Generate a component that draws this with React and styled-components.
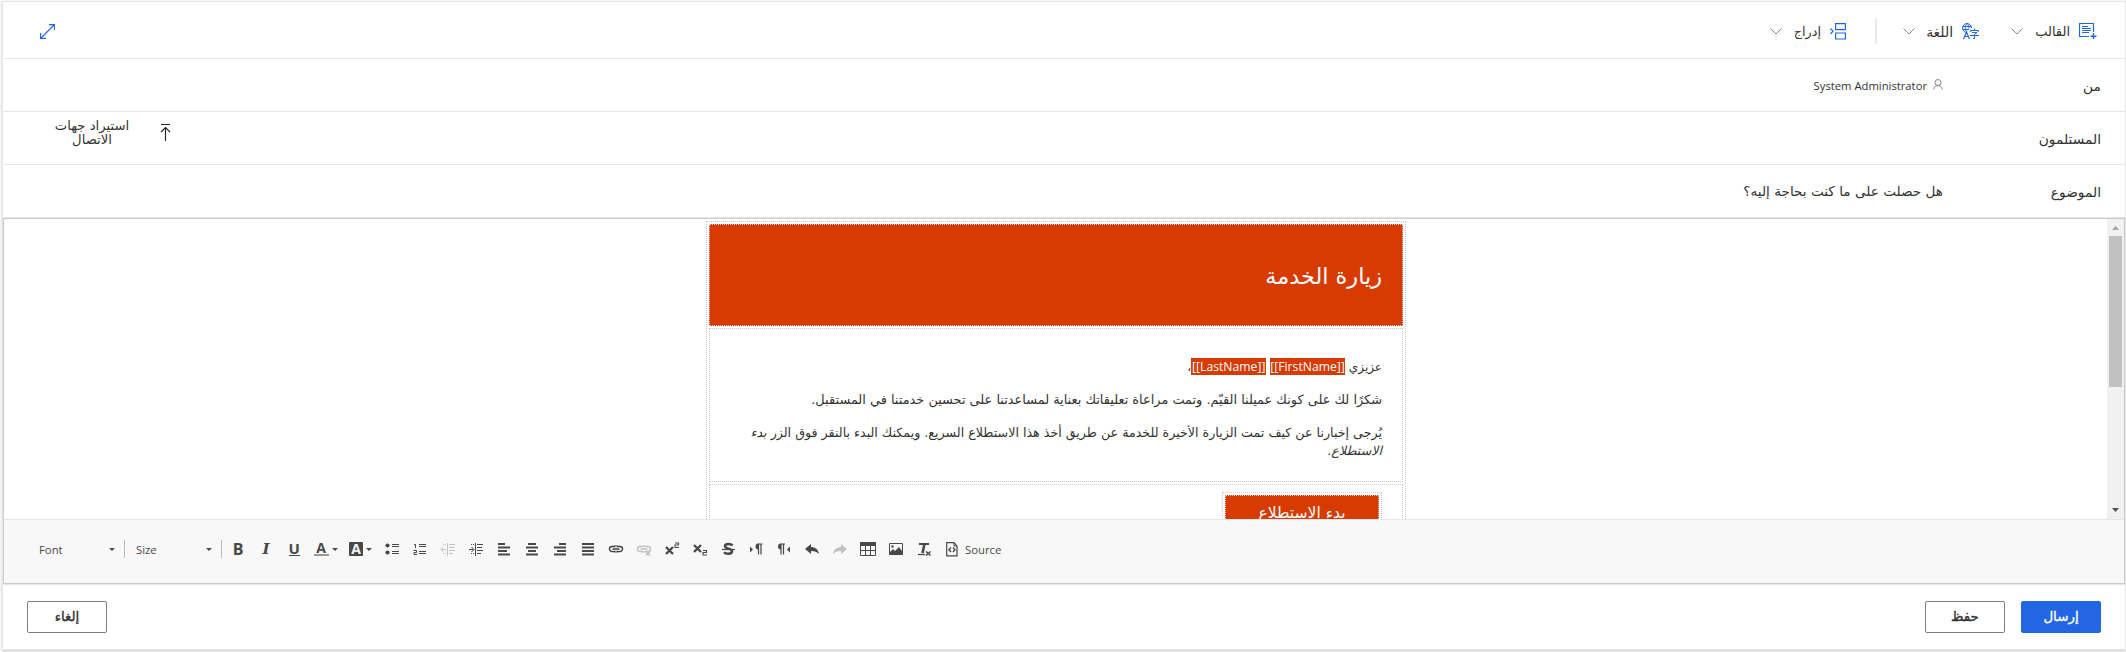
import React from "react";
import styled, { createGlobalStyle, css } from "styled-components";

const ink = "#333";
const blue = "#2266e3";
const line = "#e6e6e6";

const Global = createGlobalStyle`
  * { box-sizing: border-box; }
  body { margin: 0; background: #fff; color: ${ink}; font-family: "DejaVu Sans", sans-serif; }
  svg { display: block; flex: none; }
`;

const Page = styled.main`
  height: 652px;
  padding: 1px 0 2px 2px;
  background: #fafafa;
  display: flex;
  direction: ltr;
  overflow: hidden;
`;
const Card = styled.section`
  direction: rtl;
  flex: 1;
  height: 649px;
  background: #fff;
  border: 1px solid ${line};
  box-shadow: 0 1px 2px rgba(0, 0, 0, 0.2);
  display: flex;
  flex-direction: column;
`;
const CommandBar = styled.header`
  height: 57px;
  padding: 3px 28px 0 37px;
  display: flex;
  align-items: center;
  border-bottom: 1px solid ${line};
`;
const Command = styled.button`
  all: unset;
  display: flex;
  align-items: center;
  width: ${(p) => p.$width}px;
  margin-left: ${(p) => p.$gap || 0}px;
  color: ${ink};
  svg:last-child { margin-right: auto; }
`;
const CommandLabel = styled.span`
  font-size: ${(p) => p.$size}px;
  line-height: 20px;
  margin-right: 9px;
  white-space: nowrap;
`;
const Separator = styled.i`
  width: 2px;
  height: 25px;
  margin-left: 29px;
  background: #ebe9e7;
`;
const Expand = styled.button`
  all: unset;
  margin-right: auto;
`;
const Field = styled.div`
  height: 53px;
  padding: 1px 24px 0 50px;
  display: flex;
  align-items: center;
  border-bottom: 1px solid ${line};
`;
const FieldLabel = styled.label`
  width: 158px;
  font-size: 13.8px;
  white-space: nowrap;
`;
const Sender = styled.span`
  display: flex;
  align-items: center;
  gap: 6px;
  font: 11.25px/16px "Open Sans", sans-serif;
  svg { margin-bottom: 2px; }
`;
const Subject = styled.span`
  font-size: 13.6px;
  padding-bottom: 1px;
  white-space: nowrap;
`;
const ImportButton = styled.button`
  all: unset;
  margin-right: auto;
  display: flex;
  align-items: center;
  gap: 29px;
  padding-bottom: 12px;
`;
const ImportLabel = styled.span`
  width: 78px;
  text-align: center;
  font-size: 13.2px;
  line-height: 14px;
  white-space: nowrap;
`;

const Editor = styled.section`
  height: 366px;
  border: 1px solid #ccc;
  display: flex;
  flex-direction: column;
  direction: ltr;
`;
const Viewport = styled.div`
  height: 300px;
  display: flex;
  overflow: hidden;
`;
const Sheet = styled.div`
  flex: 1;
  display: flex;
  justify-content: center;
  align-items: flex-start;
  padding: 2px 0 0 1px;
  overflow: hidden;
`;
const dotted = css`border: 1px dotted #ccc;`;
const Mail = styled.article`
  ${dotted}
  direction: rtl;
  width: 700px;
  height: 420px;
  padding: 2px;
  display: flex;
  flex-direction: column;
  gap: 2px;
`;
const Banner = styled.div`
  ${dotted}
  height: 102px;
  padding: 2px 20px 0;
  display: flex;
  align-items: center;
  background: #d83b01;
  color: #fff;
  h1 { margin: 0; font-size: 22.4px; font-weight: 400; line-height: 30px; }
`;
const Copy = styled.div`
  ${dotted}
  height: 154px;
  padding: 29px 20px 0;
`;
const Paragraph = styled.p`
  margin: 0 0 15px;
  font-size: ${(p) => p.$size}px;
  line-height: 18px;
  white-space: nowrap;
`;
const Token = styled.bdi`
  display: inline-block;
  direction: ltr;
  height: 17px;
  width: 75px;
  text-align: center;
  background: #d83b01;
  color: #fff;
  font: 12.2px/17px "Open Sans", sans-serif;
`;
const ActionCell = styled.div`
  ${dotted}
  flex: 1;
  padding: 7px 20px;
`;
const ActionFrame = styled.div`
  ${dotted}
  width: 160px;
  padding: 2px;
`;
const Action = styled.div`
  ${dotted}
  height: 38px;
  background: #d83b01;
  color: #fff;
  text-align: center;
  font-size: 15.6px;
  line-height: 34px;
`;
const Scrollbar = styled.div`
  width: 17px;
  background: #f1f1f1;
  display: flex;
  flex-direction: column;
  align-items: center;
  justify-content: space-between;
`;
const Thumb = styled.div`
  width: 13px;
  height: 151px;
  margin-bottom: auto;
  background: #c1c1c1;
`;

const Tools = styled.div`
  flex: 1;
  border-top: 1px solid ${line};
  background: #f8f8f8;
  padding: 14px 0 0 30px;
  display: flex;
  align-items: flex-start;
`;
const Combo = styled.div`
  width: ${(p) => p.$width}px;
  height: 30px;
  display: flex;
  align-items: center;
  justify-content: space-between;
  padding: 1px 9px 0 ${(p) => p.$inset}px;
  font: 11.3px/16px "Open Sans", sans-serif;
  color: #484848;
`;
const Rule = styled.i`
  width: 1px;
  height: 18px;
  margin-top: 6px;
  background: #bcbcbc;
`;
const Tool = styled.button`
  all: unset;
  width: ${(p) => (p.$wide ? 35 : 28)}px;
  height: 30px;
  display: flex;
  align-items: center;
  justify-content: center;
  gap: 3px;
  color: #484848;
  opacity: ${(p) => (p.$off ? 0.3 : 1)};
`;
const ToolGroup = styled.div`
  display: flex;
  margin-left: 2px;
`;
const SourceLabel = styled.span`
  font: 11.3px/32px "Open Sans", sans-serif;
  margin-left: -1px;
  color: #484848;
`;
const Footer = styled.footer`
  flex: 1;
  border-top: 1px solid ${line};
  padding: 16px 24px 0;
  display: flex;
  gap: 16px;
`;
const Button = styled.button`
  width: 80px;
  height: 32px;
  padding: 0 0 1px;
  border-radius: 2px;
  border: 1px solid ${(p) => (p.$primary ? blue : "#808080")};
  background: ${(p) => (p.$primary ? blue : "#fff")};
  color: ${(p) => (p.$primary ? "#fff" : ink)};
  font: 13.4px/20px "DejaVu Sans", sans-serif;
  -webkit-text-stroke: 0.35px currentColor;
  margin-right: ${(p) => (p.$end ? "auto" : 0)};
`;

const Chevron = () => (
  <svg width="12" height="7" viewBox="0 0 12 7" fill="none" stroke="#8a8a8a"><path d="M.5.5 6 6 11.5.5" /></svg>
);
const Caret = () => (
  <svg width="6" height="3" viewBox="0 0 6 3" fill="#484848"><path d="M0 0h6L3 3z" /></svg>
);
const ScrollArrow = ({ down }) => (
  <svg width="17" height="17" viewBox="0 0 17 17" fill={down ? "#505050" : "#a3a3a3"}>
    <path d={down ? "M5 6h7L8.500 10z" : "M5 11h7L8.500 7z"} />
  </svg>
);
const TemplateIcon = () => (
  <svg width="18" height="17" viewBox="0 0 18 17" fill="none" stroke={blue}>
    <path d="M14.500 9V.500H.500v13H10" strokeWidth="1.200" />
    <path d="M3 3.500h6M3 5.500h9M3 7.500h9M3 9.500h7" />
    <path d="M14.500 10v6M11.500 13.200h6" strokeWidth="1.400" />
  </svg>
);
const LanguageIcon = () => (
  <svg width="17" height="17" viewBox="0 0 17 17" fill="none" stroke={blue}>
    <path d="M5 9.500A4.500 4.500 0 1 1 9.500 5M.700 3.500h8.600M.700 6.500h6.500M5 .500c-2.300 2.500-2.300 6 0 8.500M5 .500C6.500 2 7 3.500 7 5.500" />
    <path d="m1.500 16 3-7 3 7M2.500 13.500h4" strokeWidth="1.200" />
    <path d="M12.500 5.500v2M8.700 9V7.500h7.600V9M10 9.500h5l-2.500 2v4H11M8 12.500h9" />
  </svg>
);
const InsertIcon = () => (
  <svg width="16" height="17" viewBox="0 0 16 17" fill="none" stroke={blue}>
    <path d="M5.600.600h9.800v6H5.600zM5.600 10h9.800v6H5.600z" strokeWidth="1.200" />
    <path d="M.500 5.500 3 8.200.500 11" strokeWidth="1.200" />
  </svg>
);
const ExpandIcon = () => (
  <svg width="15" height="15" viewBox="0 0 15 15" fill="none" stroke={blue} strokeWidth="1.100">
    <path d="M1 14 14 1M9 .600h5.400V6M.600 9v5.400H6" />
  </svg>
);
const PersonIcon = () => (
  <svg width="10" height="11" viewBox="0 0 10 11" fill="none" stroke="#777" strokeWidth=".9">
    <circle cx="5" cy="3.500" r="3" /><path d="M.700 10.500C1 8 2.500 6.500 5 6.500s4 1.500 4.300 4" />
  </svg>
);
const UploadIcon = () => (
  <svg width="11" height="17" viewBox="0 0 11 17" fill="none" stroke="#222" strokeWidth="1.100">
    <path d="M1 .500h9M5.500 3.500V17M1 8l4.500-4.500L10 8" />
  </svg>
);

const Glyph = styled.span`
  font: ${(p) => (p.$italic ? "italic " : "")}bold ${(p) => p.$size || 14}px/16px ${(p) => (p.$italic ? '"DejaVu Serif", serif' : '"Open Sans", sans-serif')};
  text-align: center;
  padding-bottom: 1px;
`;
const Letter = styled(Glyph)`
  height: 14px;
  line-height: 12px;
  padding: 0;
  width: ${(p) => (p.$bar ? 15 : 11)}px;
  border-bottom: ${(p) => (p.$bar ? "2px solid #999" : "1px solid #484848")};
`;
const Chip = styled(Glyph)`
  width: 14px;
  height: 14px;
  padding: 0;
  line-height: 14px;
  border-radius: 1px;
  background: #484848;
  color: #f8f8f8;
`;
const Draw = ({ children, width = 16 }) => (
  <svg width={width} height="16" viewBox={`0 0 ${width} 16`} fill="none" stroke="currentColor">{children}</svg>
);
const lines = {
  left: "M2 3h7M2 6.500h12M2 10h9M2 13.500h12",
  center: "M4 3h8M2 6.500h12M4 10h8M2 13.500h12",
  right: "M7 3h7M2 6.500h12M5 10h9M2 13.500h12",
  full: "M2 3h12M2 6.500h12M2 10h12M2 13.500h12",
};
const AlignIcon = ({ kind }) => <Draw><path d={lines[kind]} strokeWidth="2" /></Draw>;
const BulletsIcon = () => (
  <Draw><g fill="currentColor" stroke="none"><circle cx="3.500" cy="4.500" r="2.100" /><circle cx="3.500" cy="11.500" r="2.100" /></g>
    <path d="M8 3.500h7M8 5.500h7M8 10.500h7M8 12.500h7" /></Draw>
);
const NumbersIcon = () => (
  <Draw><path d="M2 3.500h1.500V7M1.500 9.500h3v2h-2.500v2h3M7 3.500h7M7 5.500h7M7 10.500h7M7 12.500h7" /></Draw>
);
const IndentIcon = ({ out }) => (
  <Draw><path d="M7.500 2v13M9 3.500h6M9 6.500h5M9 9.500h6M9 12.500h4" />
    <path d="M3 3.500h1M5 3.500h1M3 12.500h1M5 12.500h1" />
    <path d={out ? "M6 8.500H1.500M3.500 6 1 8.500 3.500 11" : "M1 8.500h4.500M3.500 6 6 8.500 3.500 11"} /></Draw>
);
const LinkIcon = ({ cut }) => (
  <Draw><path d="M7.500 10.500H4a2.500 2.500 0 0 1 0-5h3.500M8.500 5.500H12a2.500 2.500 0 0 1 0 5H8.500M4.500 8h7" strokeWidth="1.500" />
    <path d="M6 5h4M6 11h4" strokeWidth=".8" />
    {cut && <path d="m10 10 4 4.500M14 10l-4 4.500" strokeWidth="1.800" />}</Draw>
);
const ScriptIcon = ({ low }) => (
  <Draw><path d={low ? "m2 4 7 7M9 4l-7 7" : "m2 6 7 7M9 6l-7 7"} strokeWidth="2.300" />
    <path d={low ? "M11 9.500h3.500v2H11v2.500h4" : "M11 2h3.500v2H11v2.500h4"} strokeWidth="1.100" /></Draw>
);
const StrikeIcon = () => (
  <Draw><path d="M12.500 4.500C11 2.500 5 2 5 5.200c0 2.900 7 2 7 5 0 3.300-6.500 3-8 1" strokeWidth="2.500" /><path d="M2 8.500h13" strokeWidth="1.200" /></Draw>
);
const DirectionIcon = ({ rtl }) => (
  <Draw><g transform={rtl ? "translate(-5.500 0)" : undefined}>
      <path d="M10.500 3v10.500M13 3v10.500M9.500 3H14.500" strokeWidth="1.200" /><path d="M10.500 2.500a3 3 0 0 0 0 6z" fill="currentColor" stroke="none" />
    </g><path d={rtl ? "M14 5.500v6L11 8.500z" : "M2 5.500v6l3-3z"} fill="currentColor" stroke="none" /></Draw>
);
const UndoIcon = ({ redo }) => (
  <Draw><path transform={redo ? "translate(16 0) scale(-1 1)" : undefined} d="M1 8l6-5v3c4 0 7 2 8 7-2-2-4-3-8-3v3z" fill="currentColor" stroke="none" /></Draw>
);
const TableIcon = () => (
  <Draw><path d="M0 3h16" strokeWidth="4" /><path d="M.500 3v11.500h15V3M.500 9.500h15M5.500 4v10M10.500 4v10" /></Draw>
);
const ImageIcon = () => (
  <Draw><path d="M1.500 2.500h13v11h-13z" /><path d="M2 13v-2l3-3 2 2 4-4 3 4v3z" fill="currentColor" stroke="none" /><circle cx="4.500" cy="5.500" r="1.200" fill="currentColor" stroke="none" /></Draw>
);
const ClearIcon = () => (
  <Draw><path d="M3 3h10" strokeWidth="2" /><path d="M8.500 3 6.500 12" strokeWidth="2.600" /><path d="M2 13.500h7" strokeWidth="1.300" /><path d="m10 10.500 4.500 4M14.500 10.500l-4.500 4" strokeWidth="1.600" /></Draw>
);
const SourceIcon = () => (
  <Draw width={12}><path d="M.700 1.700H8l3 3.500v9.600H.700z" strokeWidth="1.200" /><path d="M8 2v3h3" /><path d="M5 6.500 3 8.700 5 11M7 6.500l2 2.200L7 11" strokeWidth="1.400" /></Draw>
);

export default function App() {
  return (
    <Page>
      <Global />
      <Card>
        <CommandBar>
          <Command $width={86} $gap={32}><TemplateIcon /><CommandLabel $size={13}>القالب</CommandLabel><Chevron /></Command>
          <Command $width={76} $gap={26}><LanguageIcon /><CommandLabel $size={13.9}>اللغة</CommandLabel><Chevron /></Command>
          <Separator />
          <Command $width={76}><InsertIcon /><CommandLabel $size={12.8}>إدراج</CommandLabel><Chevron /></Command>
          <Expand aria-label="Expand"><ExpandIcon /></Expand>
        </CommandBar>
        <Field>
          <FieldLabel>من</FieldLabel>
          <Sender><PersonIcon />System Administrator</Sender>
        </Field>
        <Field>
          <FieldLabel>المستلمون</FieldLabel>
          <ImportButton><UploadIcon /><ImportLabel>استيراد جهات<br />الاتصال</ImportLabel></ImportButton>
        </Field>
        <Field>
          <FieldLabel>الموضوع</FieldLabel>
          <Subject>هل حصلت على ما كنت بحاجة إليه؟</Subject>
        </Field>

        <Editor>
          <Viewport>
            <Sheet>
              <Mail>
                <Banner><h1>زيارة الخدمة</h1></Banner>
                <Copy>
                  <Paragraph $size={12}>عزيزي <Token>[[FirstName]]</Token> <Token>[[LastName]]</Token>،</Paragraph>
                  <Paragraph $size={12.9}>شكرًا لك على كونك عميلنا القيّم. وتمت مراعاة تعليقاتك بعناية لمساعدتنا على تحسين خدمتنا في المستقبل.</Paragraph>
                  <Paragraph $size={12.67}>يُرجى إخبارنا عن كيف تمت الزيارة الأخيرة للخدمة عن طريق أخذ هذا الاستطلاع السريع. ويمكنك البدء بالنقر فوق الزر <em>بدء<br />الاستطلاع</em>.</Paragraph>
                </Copy>
                <ActionCell><ActionFrame><Action>بدء الاستطلاع</Action></ActionFrame></ActionCell>
              </Mail>
            </Sheet>
            <Scrollbar><ScrollArrow /><Thumb /><ScrollArrow down /></Scrollbar>
          </Viewport>
          <Tools>
            <Combo $width={90} $inset={5}>Font<Caret /></Combo>
            <Rule />
            <Combo $width={96} $inset={11}>Size<Caret /></Combo>
            <Rule />
            <ToolGroup>
              <Tool><Glyph $size={16}>B</Glyph></Tool>
              <Tool><Glyph $italic $size={15}>I</Glyph></Tool>
              <Tool><Letter $size={15}>U</Letter></Tool>
              <Tool $wide><Letter $bar>A</Letter><Caret /></Tool>
              <Tool $wide><Chip>A</Chip><Caret /></Tool>
              <Tool><BulletsIcon /></Tool>
              <Tool><NumbersIcon /></Tool>
              <Tool $off><IndentIcon out /></Tool>
              <Tool><IndentIcon /></Tool>
              <Tool><AlignIcon kind="left" /></Tool>
              <Tool><AlignIcon kind="center" /></Tool>
              <Tool><AlignIcon kind="right" /></Tool>
              <Tool><AlignIcon kind="full" /></Tool>
              <Tool><LinkIcon /></Tool>
              <Tool $off><LinkIcon cut /></Tool>
              <Tool><ScriptIcon /></Tool>
              <Tool><ScriptIcon low /></Tool>
              <Tool><StrikeIcon /></Tool>
              <Tool><DirectionIcon /></Tool>
              <Tool><DirectionIcon rtl /></Tool>
              <Tool><UndoIcon /></Tool>
              <Tool $off><UndoIcon redo /></Tool>
              <Tool><TableIcon /></Tool>
              <Tool><ImageIcon /></Tool>
              <Tool><ClearIcon /></Tool>
              <Tool><SourceIcon /></Tool>
              <SourceLabel>Source</SourceLabel>
            </ToolGroup>
          </Tools>
        </Editor>

        <Footer>
          <Button $primary>إرسال</Button>
          <Button>حفظ</Button>
          <Button $end>إلغاء</Button>
        </Footer>
      </Card>
    </Page>
  );
}
